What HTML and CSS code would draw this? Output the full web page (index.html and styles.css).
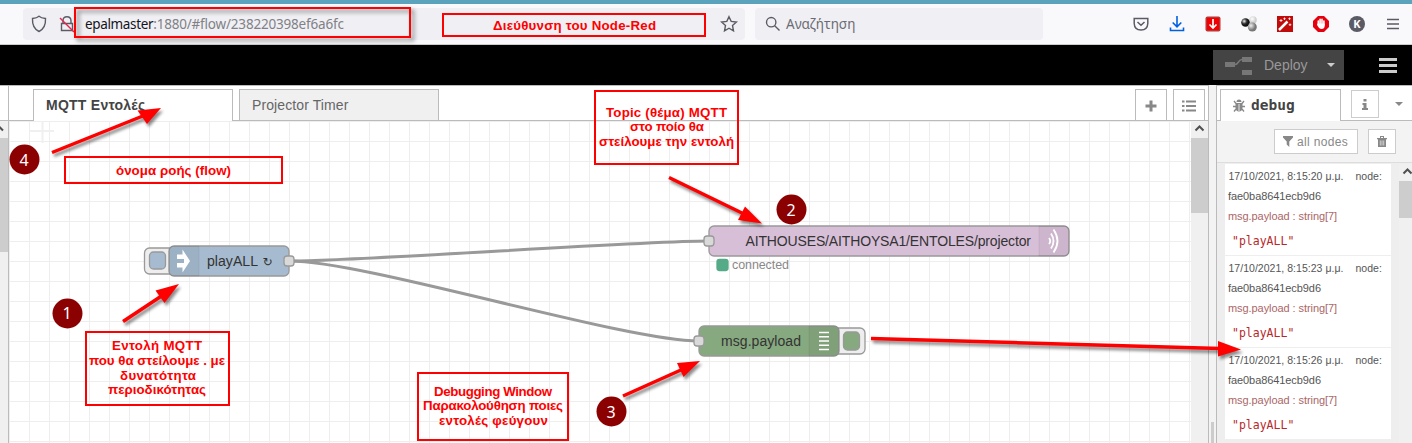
FILE: index.html
```html
<!DOCTYPE html>
<html lang="el">
<head>
<meta charset="utf-8">
<title>Node-RED</title>
<link rel="stylesheet" href="styles.css">
</head>
<body>
<div class="browser">
  <div class="urlbar">
    <svg class="shield" width="16" height="18" viewBox="0 0 16 18"><path d="M8 1.200C6 3 3.500 3.300 1.500 3.500C1.200 9 3 14 8 16.500C13 14 14.800 9 14.500 3.500C12.500 3.300 10 3 8 1.200Z"/></svg>
    <svg class="lock" width="16" height="18" viewBox="0 0 16 18"><path d="M4 8V6Q4 1.800 8 1.800T12 6V8M2.500 8.500H13.500V15.500H2.500Z"/><path class="slash" d="M1 3L15 17"/></svg>
    <span class="url"><b>epalmaster</b>:1880/#flow/238220398ef6a6fc</span>
    <svg class="star" width="18" height="18" viewBox="0 0 18 18"><path d="M9 1.700L11.200 6.400L16.400 7L12.500 10.500L13.500 15.800L9 13.200L4.500 15.800L5.500 10.500L1.600 7L6.800 6.400Z"/></svg>
  </div>
  <div class="search">
    <svg width="16" height="16" viewBox="0 0 16 16"><circle cx="6.200" cy="6.200" r="4.700"/><path d="M9.700 9.700L14.500 14.500"/></svg>
    <span>Αναζήτηση</span>
  </div>
  <div class="extensions">
    <svg viewBox="0 0 16 16"><path class="line" d="M1.200 2.500H14.800V7.500Q14.500 14 8 14T1.200 7.500ZM4.500 6L8 9.300L11.500 6"/></svg>
    <svg viewBox="0 0 16 16"><path class="blue" d="M8 0V10.500M3.700 6.500L8 10.800L12.300 6.500M1.500 11.500V14.500H14.500V11.500"/></svg>
    <svg viewBox="0 0 16 16"><rect x=".5" y=".5" width="15" height="15" rx="2" fill="#b33"/><rect x="2" y="2" width="12" height="12" fill="#f00000"/><path class="white" d="M8 3V12M4.500 8.500L8 12L11.500 8.500"/></svg>
    <svg viewBox="0 0 16 16"><defs><radialGradient id="dark" cx=".35" cy=".35"><stop offset="0" stop-color="#eee"/><stop offset=".6" stop-color="#333"/><stop offset="1" stop-color="#111"/></radialGradient><radialGradient id="grey" cx=".35" cy=".35"><stop offset="0" stop-color="#eee"/><stop offset="1" stop-color="#777"/></radialGradient><radialGradient id="light" cx=".4" cy=".35"><stop offset="0" stop-color="#fff"/><stop offset="1" stop-color="#ccc"/></radialGradient></defs><circle cx="12" cy="4" r="3.800" fill="url(#light)"/><circle cx="4.500" cy="6.500" r="4.300" fill="url(#dark)"/><circle cx="11.300" cy="11" r="4.500" fill="url(#grey)"/></svg>
    <svg viewBox="0 0 16 16"><rect width="16" height="16" fill="#c00b0b"/><path d="M2 14L10.500 5.500" stroke="#fff" stroke-width="2.500"/><path d="M4 3V6M2.500 4.500H5.500M7.500 1.500V4M6.300 2.700H8.700M13 7.500V10M11.700 8.700H14.300M12.500 1.500V4M11.300 2.700H13.700" stroke="#fff" stroke-width=".8"/></svg>
    <svg viewBox="0 0 16 16"><path d="M5 0H11L16 5V11L11 16H5L0 11V5Z" fill="#e6000d"/><path d="M5.300 9V5M7.100 8V3.200M9 8V3.200M10.900 9V5" stroke="#fff" stroke-width="1.600" stroke-linecap="round"/><path d="M4.600 7.500H11.700V10Q11.500 13 8.500 13Q6 13 4 8.500Z" fill="#fff"/></svg>
    <svg viewBox="0 0 16 16"><circle cx="8" cy="8" r="8" fill="#5b5b66"/><text x="8" y="12" class="avatar">K</text></svg>
    <svg viewBox="0 0 16 16"><path d="M2 3.500H14M2 8H14M2 12.500H14" stroke="#5b5b66" stroke-width="1.300"/></svg>
  </div>
</div>
<header class="header">
  <div class="deploy">
    <svg width="28" height="20" viewBox="0 0 28 20"><path d="M0 7H10V12H0ZM17 2H27V7H17ZM17 15H27V20H17Z" fill="#777"/><path d="M10 9.500C14 9.500 13 4.500 17 4.500" fill="none" stroke="#777" stroke-width="1.500"/></svg>
    <span>Deploy</span>
    <i class="caret"></i>
  </div>
  <div class="menu"><i></i><i></i><i></i></div>
</header>
<main class="main">
  <aside class="palette">
    <div class="palette-top"></div>
    <div class="palette-scroll"><svg width="8" height="17" viewBox="0 0 8 17"><path d="M-5 9.500L-1 5.500L3 9.500" fill="none" stroke="#505050" stroke-width="2"/></svg><div class="thumb"></div></div>
  </aside>
  <section class="workspace">
    <nav class="tabs">
      <div class="tab active">MQTT Εντολές</div>
      <div class="tab">Projector Timer</div>
      <div class="tab-tools">
        <span class="tool"><svg width="12" height="12" viewBox="0 0 12 12"><path d="M6 .5V11.500M.5 6H11.500" stroke="#888" stroke-width="3"/></svg></span>
        <span class="tool"><svg width="14" height="12" viewBox="0 0 14 12"><path d="M0 1.500H2.500M0 6H2.500M0 10.500H2.500M4 1.500H14M4 6H14M4 10.500H14" stroke="#888" stroke-width="2"/></svg></span>
      </div>
    </nav>
    <div class="canvas">
      <svg class="flow" width="1182" height="322" viewBox="9 121 1182 322">
        <path d="M30 131H54M42.500 121V143" stroke="#f0f0f0" stroke-width="2"/>
        <g class="wires"><path d="M290 261C365 261 634 241 709 241"/><path d="M290 261C365 261 624 341 699 341"/></g>
        <g class="node">
          <rect class="frame" x="144.500" y="248" width="32" height="26" rx="5"/>
          <rect x="149.500" y="252" width="16" height="17" rx="4" fill="#a6bbcf"/>
          <rect x="169" y="246" width="120" height="30" rx="5" fill="#a6bbcf"/>
          <path class="shade" d="M199 246H174Q169 246 169 251V271Q169 276 174 276H199Z"/>
          <path class="glyph" d="M177 254.500H182.500V249.500L190 261L182.500 272.500V267.500H177V263H184V259H177Z"/>
          <rect class="port" x="284" y="256" width="10" height="10" rx="3"/>
          <text x="207" y="266" textLength="51" lengthAdjust="spacingAndGlyphs">playALL</text><text x="262.500" y="266" class="repeat">↻</text>
        </g>
        <g class="node">
          <rect x="709" y="226" width="360" height="30" rx="5" fill="#d8bfd8"/>
          <path class="shade" d="M1039 226H1064Q1069 226 1069 231V251Q1069 256 1064 256H1039Z"/>
          <g class="waves"><path d="M1049 238Q1051.500 241 1049 244"/><path d="M1051 233.500Q1056 241 1051 248.500"/><path d="M1053.500 229.500Q1061.500 241 1053.500 252.500"/></g>
          <rect class="port" x="704" y="236" width="10" height="10" rx="3"/>
          <text x="745.500" y="246" textLength="285.500">AITHOUSES/AITHOYSA1/ENTOLES/projector</text>
          <rect x="717" y="259.500" width="11" height="11" rx="2.500" class="status"/>
          <text x="732" y="269" class="status-label" textLength="57">connected</text>
        </g>
        <g class="node">
          <rect class="frame" x="832" y="328" width="33" height="26" rx="5"/>
          <rect x="843.500" y="332" width="16" height="18" rx="4" fill="#87a980"/>
          <rect x="699" y="326" width="140" height="30" rx="5" fill="#87a980"/>
          <path class="shade" d="M809 326H834Q839 326 839 331V351Q839 356 834 356H809Z"/>
          <path d="M819 332.500H829M819 336.700H829M819 341H829M819 345.200H829M819 349.500H829" stroke="#fff" stroke-width="1.600"/>
          <rect class="port" x="694" y="336" width="10" height="10" rx="3"/>
          <text x="721" y="346" textLength="80">msg.payload</text>
        </g>
      </svg>
      <div class="scroll"><svg width="17" height="17" viewBox="0 0 17 17"><path d="M4.500 9.500L8.500 5.500L12.500 9.500"/></svg><div class="thumb"></div></div>
    </div>
  </section>
  <div class="separator"><i></i></div>
  <aside class="sidebar">
    <nav class="side-tabs">
      <div class="side-tab"><svg width="12" height="13" viewBox="0 0 12 13"><path d="M3.500 3Q3.500 .5 6 .5T8.500 3ZM2.500 4H9.500V9Q9 12.500 6 12.500T2.500 9Z" fill="#888"/><path d="M0 7.500H12M1 2L3 4.500M11 2L9 4.500M1 12.500L3 10M11 12.500L9 10" stroke="#888" stroke-width="1.300" fill="none"/><path d="M6 5V12" stroke="#fff" stroke-width=".8"/></svg><b>debug</b></div>
      <div class="info"><svg width="6" height="11" viewBox="0 0 6 11"><path d="M1.500 0H4.500V2.500H1.500ZM.5 4H4.500V9H6V11H0V9H1.500V6H.5Z" fill="#888"/></svg></div>
      <i class="caret"></i>
    </nav>
    <div class="filters">
      <div class="filter"><svg width="10" height="11" viewBox="0 0 10 11"><path d="M0 0H10V1.500L6.300 5.500V11L3.700 8.500V5.500L0 1.500Z" fill="#888"/></svg><span>all nodes</span></div>
      <div class="filter trash"><svg width="10" height="11" viewBox="0 0 10 11"><path d="M0 2H3V0H7V2H10V3.300H9V11H1V3.300H0ZM4 1V2H6V1Z" fill="#888"/><path d="M3.300 4.500V9.500M5 4.500V9.500M6.700 4.500V9.500" stroke="#fff" stroke-width=".6"/></svg></div>
    </div>
    <div class="debug">
      <div class="messages">
        <article class="message"><p class="meta"><span>17/10/2021, 8:15:20 μ.μ.</span><span>node:</span></p><p class="id">fae0ba8641ecb9d6</p><p class="topic">msg.payload : string[7]</p><p class="value">"playALL"</p></article>
        <article class="message"><p class="meta"><span>17/10/2021, 8:15:23 μ.μ.</span><span>node:</span></p><p class="id">fae0ba8641ecb9d6</p><p class="topic">msg.payload : string[7]</p><p class="value">"playALL"</p></article>
        <article class="message"><p class="meta"><span>17/10/2021, 8:15:26 μ.μ.</span><span>node:</span></p><p class="id">fae0ba8641ecb9d6</p><p class="topic">msg.payload : string[7]</p><p class="value">"playALL"</p></article>
      </div>
      <div class="scroll"><svg width="17" height="17" viewBox="0 0 17 17"><path d="M4.500 9.500L8.500 5.500L12.500 9.500"/></svg><div class="thumb"></div></div>
    </div>
  </aside>
</main>
<svg class="annotations" width="1412" height="443" viewBox="0 0 1412 443">
  <g class="box">
    <rect class="shadow" x="75" y="8" width="335" height="29"/>
    <rect x="443" y="14" width="262" height="22"/>
    <rect x="65" y="157" width="217" height="26"/>
    <rect x="86" y="332" width="143" height="73"/>
    <rect x="595" y="91" width="143" height="73"/>
    <rect x="418" y="373" width="150" height="67"/>
  </g>
  <g class="note">
    <text x="493" y="30" textLength="163">Διεύθυνση του Node-Red</text>
    <text x="116" y="175" textLength="115">όνομα ροής (flow)</text>
    <text x="112" y="350" textLength="90">Εντολή MQTT</text>
    <text x="89" y="365" textLength="136">που θα στείλουμε . με</text>
    <text x="120" y="380" textLength="76">δυνατότητα</text>
    <text x="108" y="394" textLength="98">περιοδικότητας</text>
    <text x="606" y="117" textLength="121">Topic (θέμα) MQTT</text>
    <text x="630" y="131" textLength="74">στο ποίο θα</text>
    <text x="599" y="146" textLength="135">στείλουμε την εντολή</text>
    <text x="434" y="396" textLength="118">Debugging Window</text>
    <text x="423" y="410" textLength="140">Παρακολούθηση ποιες</text>
    <text x="439" y="425" textLength="109">εντολές φεύγουν</text>
  </g>
  <g class="arrow">
    <path d="M52 152.500L144 115.500"/><path class="head" d="M161 108L137.500 110.500L147 124Z"/>
    <path d="M123 321.500L163 295"/><path class="head" d="M179 284L155.500 290.500L164.500 303Z"/>
    <path d="M669 177.500L743 213.500"/><path class="head" d="M762 223.500L745 206.500L738 220Z"/>
    <path d="M623 396L682 369.500"/><path class="head" d="M700 361L677 363L683.500 377Z"/>
    <path d="M871 338.500L1220 348.500"/><path class="head" d="M1241 349.500L1218 341L1218 356.500Z"/>
  </g>
  <g class="badge">
    <circle cx="24.500" cy="159.500" r="15"/><text x="24" y="165.500">4</text>
    <circle cx="67.500" cy="313.500" r="15"/><text x="67" y="319">1</text>
    <circle cx="791.500" cy="209.500" r="15"/><text x="791" y="215.500">2</text>
    <circle cx="611.500" cy="411.500" r="15"/><text x="611" y="417.500">3</text>
  </g>
</svg>
</body>
</html>
```
FILE: styles.css
```css
* { box-sizing: border-box; }
body { margin: 0; width: 1412px; height: 443px; overflow: hidden; background: #fff; font-family: "Liberation Sans", Arial, sans-serif; font-size: 14px; position: relative; }
p { margin: 0; }
svg { display: block; flex: none; }

.browser { height: 45px; border-top: 4px solid #5ba3bd; border-bottom: 1px solid #ccc; background: #f9f9fb; display: flex; align-items: center; padding-left: 23px; gap: 10px; font-family: "Noto Sans", "Open Sans", sans-serif; }
.urlbar { width: 722px; height: 32px; border-radius: 4px; background: #f0f0f4; display: flex; align-items: center; padding: 0 7px 0 8px; }
.urlbar path, .search path, .search circle { fill: none; stroke: #5b5b66; stroke-width: 1.4; }
.urlbar .slash { stroke: #e22850; }
.lock { margin-left: 12px; }
.url { margin-left: 10px; color: #808086; font-size: 13.5px; letter-spacing: -0.19px; flex: 1; }
.url b { font-weight: 400; color: #15141a; letter-spacing: -0.35px; }
.search { width: 288px; height: 32px; border-radius: 4px; background: #f0f0f4; display: flex; align-items: center; padding-left: 10px; gap: 5px; color: #6b6b73; font-size: 13.5px; }
.extensions { margin-left: auto; padding-right: 11px; display: flex; gap: 20px; }
.extensions svg { width: 16px; height: 16px; }
.extensions .line { fill: none; stroke: #5b5b66; stroke-width: 1.5; }
.extensions .blue { fill: none; stroke: #0061e0; stroke-width: 1.6; }
.extensions .white { fill: none; stroke: #fff; stroke-width: 1.7; }
.avatar { fill: #fff; font-size: 11px; font-weight: 700; text-anchor: middle; }

.header { height: 40px; background: #000; display: flex; align-items: center; justify-content: flex-end; padding-right: 15px; gap: 35px; }
.deploy { width: 131px; height: 30px; background: #444; color: #999; display: flex; align-items: center; padding-left: 12px; }
.deploy span { margin-left: 11px; font-size: 14px; }
.caret { border: 4.5px solid transparent; border-top-color: #888; border-bottom: 0; }
.deploy .caret { border-top-color: #ccc; margin-left: 19px; }
.menu { width: 18px; display: grid; gap: 3px; }
.menu i { height: 3px; background: #ccc; }

.main { display: flex; height: 358px; }
.palette { width: 9px; border-right: 1px solid #bbb; display: flex; flex-direction: column; }
.palette-top { height: 36px; border-top: 1px solid #bbb; border-bottom: 1px solid #bbb; }
.palette-scroll { flex: 1; background: #f0f0f0; }
.palette .thumb { height: 114px; background: #cdcdcd; }

.workspace { width: 1200px; border-right: 1px solid #bbb; border-top: 1px solid #bbb; }
.tabs { height: 35px; padding: 3px 3px 0 24px; display: flex; gap: 6px; border-bottom: 1px solid #bbb; }
.tab { width: 200px; height: 31px; border: 1px solid #bbb; border-bottom: 0; background: #f0f0f0; color: #666; padding-left: 12px; line-height: 31px; letter-spacing: .1px; }
.tab.active { height: 32px; background: #fff; color: #444; font-weight: 700; letter-spacing: .25px; }
.tab-tools { margin-left: auto; display: flex; gap: 6px; }
.tool { width: 32px; height: 31px; border: 1px solid #bbb; border-bottom: 0; display: flex; align-items: center; justify-content: center; padding-top: 2px; }
.canvas { height: 322px; display: flex; background: linear-gradient(90deg, #eee 1px, transparent 1px) 0 0 / 20px 20px, linear-gradient(#eee 1px, transparent 1px) 0 0 / 20px 20px, #fff; }
.scroll { width: 17px; background: #f0f0f0; flex: none; overflow: hidden; }
.scroll path { fill: none; stroke: #505050; stroke-width: 2; }
.scroll .thumb { height: 75px; background: #cdcdcd; }
.wires path { fill: none; stroke: #999; stroke-width: 3; }
.node rect { stroke: #999; stroke-width: 1.3; }
.node .frame { fill: #eee; }
.node .port { fill: #d9d9d9; }
.node .status { fill: #5a8; stroke: #5a8; }
.node text { fill: #333; font-size: 14px; }
.node .repeat { font-family: "DejaVu Sans", sans-serif; font-size: 12px; }
.node .status-label { fill: #888; font-size: 12.5px; }
.shade { fill: #000; fill-opacity: .05; stroke: #000; stroke-opacity: .06; }
.glyph { fill: #fff; }
.waves path { fill: none; stroke: #fff; stroke-width: 1.8; }

.separator { width: 7px; background: #f3f3f3; display: flex; align-items: flex-end; padding-left: 2px; }
.separator i { width: 3px; height: 21px; background: #ccc; }
.sidebar { flex: 1; border-left: 1px solid #bbb; border-top: 1px solid #bbb; display: flex; flex-direction: column; min-width: 0; overflow: hidden; }
.side-tabs { height: 35px; flex: none; padding: 3px 9px 0 3px; border-bottom: 1px solid #bbb; display: flex; }
.side-tab { width: 121px; height: 32px; border: 1px solid #bbb; border-bottom: 0; background: #fff; display: flex; align-items: center; padding: 0 0 1px 12px; gap: 6px; font-family: "DejaVu Sans Mono", monospace; color: #444; font-size: 14.5px; }
.info { width: 28px; height: 28px; border: 1px solid #ccc; margin: 1px 0 0 10px; display: flex; justify-content: center; padding-top: 8px; }
.side-tabs .caret { margin: 13px 0 0 auto; height: 0; }
.filters { height: 42px; flex: none; background: #f3f3f3; border-bottom: 1px solid #ddd; display: flex; justify-content: flex-end; gap: 10px; padding: 8px 16px 0 0; }
.filter { width: 84px; height: 25px; border: 1px solid #ccc; background: #fff; color: #888; display: flex; align-items: center; padding-left: 8px; gap: 4px; font-size: 12px; letter-spacing: .35px; white-space: nowrap; }
.trash { width: 28px; }
.debug { flex: 1; display: flex; padding-top: 1px; background: #eee; }
.messages { width: 166px; flex: none; margin: 0 8px; }
.message { height: 92px; padding: 2px 0 0 3px; background: #fff; border-bottom: 1px solid #eee; font-size: 11px; color: #555; white-space: nowrap; }
.message p { height: 20px; line-height: 20px; }
.meta { display: flex; gap: 12px; font-size: 10.5px; letter-spacing: .03px; padding-left: .5px; }
.message .id { letter-spacing: -.08px; }
.message .topic { color: #a66; font-size: 11px; letter-spacing: -.07px; }
.message .value { height: 30px; line-height: 31px; padding-left: 4px; color: #b72828; font-family: "DejaVu Sans Mono", monospace; font-size: 11.5px; }
.debug .thumb { height: 37px; }

.annotations { position: absolute; left: 0; top: 0; }
.box rect { fill: none; stroke: #f00; stroke-width: 2; }
.box .shadow { filter: drop-shadow(3px 3px 2px rgba(0, 0, 0, .5)); }
.note text { font-weight: 700; font-size: 13.3px; fill: #f00; }
.arrow { filter: drop-shadow(2px 3px 1.5px rgba(0, 0, 0, .45)); }
.arrow path { fill: none; stroke: #f00; stroke-width: 3.5; }
.arrow .head { fill: #f00; stroke: none; }
.badge circle { fill: #8b0000; }
.badge text { fill: #fff; font-family: "Noto Sans", sans-serif; font-size: 16px; text-anchor: middle; }
```
